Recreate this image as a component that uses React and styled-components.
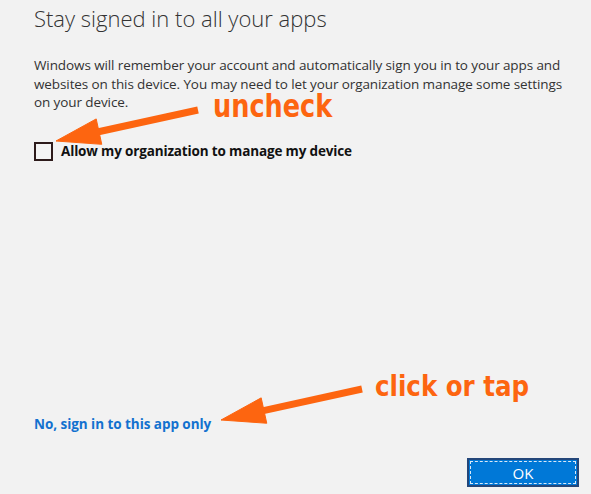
import React from 'react';
import styled, { createGlobalStyle } from 'styled-components';

const GlobalStyle = createGlobalStyle`
  html, body {
    margin: 0;
    padding: 0;
    background: #f2f2f2;
  }
  * { box-sizing: border-box; }
`;

const Page = styled.div`
  position: relative;
  width: 591px;
  height: 494px;
  padding: 4px 12px 7px 34px;
  display: flex;
  flex-direction: column;
  background: #f2f2f2;
  font-family: "Open Sans", "Noto Sans", sans-serif;
  color: #2b2b2b;
  overflow: hidden;
`;

const Title = styled.h1`
  margin: 0;
  font-size: 22px;
  line-height: 29px;
  font-weight: 300;
  color: #333;
`;

const Text = styled.p`
  margin: 23px 0 0;
  width: 540px;
  font-size: 13.5px;
  line-height: 18.5px;
  letter-spacing: -0.1px;
  color: #333;
`;

const CheckRow = styled.label`
  display: flex;
  align-items: center;
  gap: 8px;
  margin-top: 30px;
  font-size: 13.5px;
  font-weight: 700;
  letter-spacing: -0.15px;
  color: #111;
`;

const Box = styled.span`
  width: 19px;
  height: 19px;
  border: 2px solid #2d1b1b;
  background: #f4f4f4;
  flex: none;
`;

const Link = styled.a`
  margin-top: auto;
  font-size: 13.5px;
  line-height: 19px;
  font-weight: 700;
  letter-spacing: -0.05px;
  color: #1271cf;
  text-decoration: none;
`;

const Footer = styled.div`
  display: flex;
  justify-content: flex-end;
  margin-top: 24px;
`;

const Button = styled.button`
  width: 112px;
  height: 29px;
  padding: 0;
  background: #0078d7;
  border: 2px solid #24477a;
  outline: 1px dashed #dbe9f7;
  outline-offset: -4px;
  color: #fff;
  font-family: "Open Sans", "Noto Sans", sans-serif;
  font-size: 15px;
`;

const Overlay = styled.svg`
  position: absolute;
  left: 0;
  top: 0;
  pointer-events: none;
`;

const Note = styled.span`
  position: absolute;
  left: ${p => p.x}px;
  top: ${p => p.y}px;
  font-family: "DejaVu Sans Condensed", "DejaVu Sans", sans-serif;
  font-weight: 700;
  font-size: ${p => p.size}px;
  line-height: 22px;
  color: #fd6510;
  transform: scale(${p => p.sx}, 1.08);
  transform-origin: left top;
  white-space: nowrap;
`;

const Arrow = ({ tail, tip }) => {
  const dx = tip[0] - tail[0];
  const dy = tip[1] - tail[1];
  const len = Math.hypot(dx, dy);
  const ux = dx / len;
  const uy = dy / len;
  const head = 44;
  const half = 13;
  const bx = tip[0] - ux * head;
  const by = tip[1] - uy * head;
  const p1 = [bx - uy * half, by + ux * half];
  const p2 = [bx + uy * half, by - ux * half];
  return (
    <g fill="#fd6510" stroke="#fd6510">
      <line x1={tail[0]} y1={tail[1]} x2={bx + ux * 4} y2={by + uy * 4} strokeWidth="7" />
      <polygon points={`${tip[0]},${tip[1]} ${p1[0]},${p1[1]} ${p2[0]},${p2[1]}`} strokeWidth="1" />
    </g>
  );
};

export default function App() {
  return (
    <>
      <GlobalStyle />
      <Page>
        <Title>Stay signed in to all your apps</Title>
        <Text>
          Windows will remember your account and automatically sign you in to your apps and
          websites on this device. You may need to let your organization manage some settings
          on your device.
        </Text>
        <CheckRow>
          <Box />
          Allow my organization to manage my device
        </CheckRow>
        <Link href="#">No, sign in to this app only</Link>
        <Footer>
          <Button>OK</Button>
        </Footer>

        <Overlay width="591" height="494" viewBox="0 0 591 494">
          <Arrow tail={[198, 110]} tip={[56, 141]} />
          <Arrow tail={[362, 389]} tip={[221, 420]} />
        </Overlay>
        <Note x={213} y={94} size={29} sx={0.98}>uncheck</Note>
        <Note x={375} y={374} size={27} sx={1.01}>click or tap</Note>
      </Page>
    </>
  );
}
